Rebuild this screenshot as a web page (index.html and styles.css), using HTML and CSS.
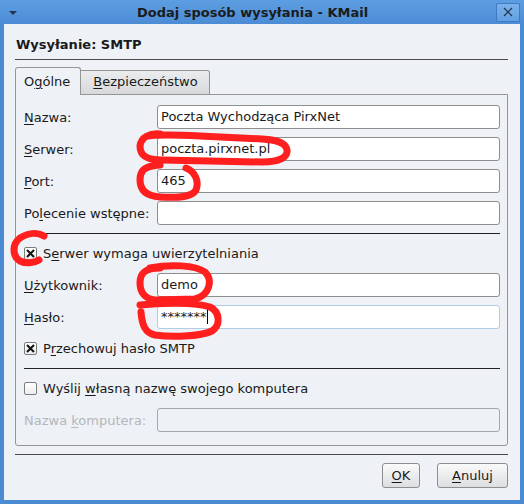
FILE: index.html
```html
<!DOCTYPE html>
<html>
<head>
    <meta charset="utf-8">
    <title>Dodaj sposób wysyłania - KMail</title>
    <link rel="stylesheet" href="styles.css">
</head>
<body>
<div class="window">
    <div class="titlebar">
        <span class="menu-arrow"></span>
        <span class="title">Dodaj sposób wysyłania - KMail</span>
        <span class="close-btn">
            <svg width="10" height="10" viewBox="0 0 10 10"><path d="M1 1 L9 9 M9 1 L1 9" stroke="#1e2f45" stroke-width="1.1" fill="none"/></svg>
        </span>
    </div>

    <div class="content">
        <h2 class="page-title">Wysyłanie: SMTP</h2>
        <div class="rule"></div>

        <div class="tabs">
            <div class="tab active">O<u>g</u>ólne</div>
            <div class="tab"><u>B</u>ezpieczeństwo</div>
        </div>

        <div class="panel">
            <div class="form-grid">
                <label><u>N</u>azwa:</label>
                <div class="input">Poczta Wychodząca PirxNet</div>
                <label><u>S</u>erwer:</label>
                <div class="input">poczta.pirxnet.pl</div>
                <label><u>P</u>ort:</label>
                <div class="input">465</div>
                <label>Po<u>l</u>ecenie wstępne:</label>
                <div class="input"></div>
            </div>

            <div class="sep"></div>

            <div class="check-row">
                <span class="checkbox checked"><svg width="9" height="9" viewBox="0 0 9 9"><path d="M1 1 L8 8 M8 1 L1 8" stroke="#111" stroke-width="2" fill="none"/></svg></span>
                <span>S<u>e</u>rwer wymaga uwierzytelniania</span>
            </div>

            <div class="form-grid auth">
                <label><u>U</u>żytkownik:</label>
                <div class="input">demo</div>
                <label><u>H</u>asło:</label>
                <div class="input focused">*******<span class="caret"></span></div>
            </div>

            <div class="check-row">
                <span class="checkbox checked"><svg width="9" height="9" viewBox="0 0 9 9"><path d="M1 1 L8 8 M8 1 L1 8" stroke="#111" stroke-width="2" fill="none"/></svg></span>
                <span>P<u>r</u>zechowuj hasło SMTP</span>
            </div>

            <div class="sep"></div>

            <div class="check-row">
                <span class="checkbox"></span>
                <span>Wyślij <u>w</u>łasną nazwę swojego komputera</span>
            </div>

            <div class="form-grid host">
                <label class="disabled">Nazwa <u>k</u>omputera:</label>
                <div class="input disabled"></div>
            </div>
        </div>

        <div class="rule bottom-rule"></div>

        <div class="buttons">
            <button class="btn btn-ok"><u>O</u>K</button>
            <button class="btn btn-cancel"><u>A</u>nuluj</button>
        </div>
    </div>

    <!-- hand-drawn highlights over the form -->
    <svg class="marks" width="524" height="504" viewBox="0 0 524 504">
        <g stroke="#ff1f1f" stroke-width="7" fill="none" stroke-linecap="round" stroke-linejoin="round">
            <path d="M160 134 C150 133 141 137 140 146 C140 156 147 160 162 160 L262 162 C280 162 288 157 287 150 C286 143 278 140 262 139 L200 136 C180 135 160 134 148 136"/>
            <path d="M186 168 C196 172 199 182 196 190 C192 197 180 198 160 197 C146 196 140 190 140 180 C140 170 145 166 160 165"/>
            <path d="M44 236 C37 232 28 233 20 238 C12 244 12 256 20 261 C26 264 34 263 39 260"/>
            <path d="M150 268 C170 264 195 265 205 272 C213 280 210 295 195 299 L155 300 C145 299 140 292 140 283 C140 273 145 268 160 268"/>
            <path d="M140 305 C160 303 195 302 210 307 C220 312 221 325 212 331 C200 337 170 337 155 335 C145 333 142 325 141 312"/>
        </g>
    </svg>
</div>
</body>
</html>
```

FILE: styles.css
```css
body {
    margin: 0;
    font-family: "DejaVu Sans", sans-serif;
    font-size: 13px;
    color: #1a1a1a;
}
u {
    text-decoration: underline;
    text-underline-offset: 2px;
}
.window {
    position: relative;
    width: 524px;
    height: 504px;
    box-sizing: border-box;
    padding: 0 4px 4px 4px;
    background-color: #4a8bd4;
    display: flex;
    flex-direction: column;
}
.titlebar {
    height: 24px;
    margin: 0 -4px;
    display: flex;
    align-items: center;
    background: linear-gradient(#5d9ee2, #4b8cd5);
    position: relative;
}
.menu-arrow {
    width: 0;
    height: 0;
    margin-left: 9px;
    margin-top: 1px;
    border-left: 4px solid transparent;
    border-right: 4px solid transparent;
    border-top: 4px solid #24344a;
}
.title {
    flex: 1;
    text-align: center;
    font-weight: bold;
    color: #1c1c1c;
    margin-right: 8px;
}
.close-btn {
    width: 22px;
    height: 17px;
    margin-right: 4px;
    border: 1px solid #3d7bc4;
    border-radius: 2px;
    background: linear-gradient(#7ab2ea, #62a0e2);
    display: flex;
    align-items: center;
    justify-content: center;
}
.content {
    flex: 1;
    background-color: #eef1f6;
    padding: 0 12px 0 11px;
    display: flex;
    flex-direction: column;
}
.page-title {
    margin: 13px 0 0 1px;
    font-size: 13px;
    line-height: 15px;
    font-weight: bold;
}
.rule {
    height: 1px;
    background-color: #4a4a4a;
    margin-top: 7px;
}
.tabs {
    display: flex;
    align-items: flex-end;
    margin-top: 7px;
    margin-bottom: -1px;
    position: relative;
    z-index: 1;
}
.tab {
    box-sizing: border-box;
    height: 25px;
    padding: 3px 11px 0 12px;
    line-height: 15px;
    border: 1px solid #959595;
    border-left: none;
    border-radius: 0 3px 0 0;
    background: linear-gradient(#ebecee, #d7d9dc);
}
.tab.active {
    height: 28px;
    padding: 6px 10px 0 8px;
    border-left: 1px solid #959595;
    border-bottom: none;
    border-radius: 3px 3px 0 0;
    background: #eef1f6;
}
.panel {
    border: 1px solid #959595;
    border-radius: 0 0 3px 3px;
    padding: 10px 7px 13px 8px;
}
.form-grid {
    display: grid;
    grid-template-columns: 133px 1fr;
    grid-auto-rows: 24px;
    row-gap: 8px;
    align-items: center;
}
.form-grid.auth,
.form-grid.host {
    margin-top: 10px;
}
.input {
    box-sizing: border-box;
    height: 24px;
    border: 1px solid #8e8e8e;
    border-radius: 3px;
    background-color: #fff;
    padding: 0 3px;
    line-height: 22px;
    white-space: nowrap;
}
.input.focused {
    border-color: #b4cbe4;
}
.input.disabled {
    background-color: #eef1f6;
    border-color: #a5a7aa;
}
.caret {
    display: inline-block;
    width: 1px;
    height: 15px;
    background-color: #000;
    vertical-align: -3px;
}
label.disabled {
    color: #b3b7bc;
}
.sep {
    height: 1px;
    background-color: #222;
    margin-top: 8px;
}
.check-row {
    display: flex;
    align-items: center;
    height: 20px;
    margin-top: 9px;
}
.check-row + .sep {
    margin-top: 10px;
}
.checkbox {
    box-sizing: border-box;
    width: 13px;
    height: 13px;
    margin-right: 6px;
    border: 1px solid #7c7c7c;
    border-radius: 2px;
    background: linear-gradient(#ffffff, #ececec);
    display: flex;
    align-items: center;
    justify-content: center;
}
.bottom-rule {
    margin-top: 8px;
}
.buttons {
    display: flex;
    justify-content: flex-end;
    gap: 17px;
    margin-top: 8px;
}
.btn {
    height: 25px;
    font-family: "DejaVu Sans", sans-serif;
    font-size: 13px;
    color: #1a1a1a;
    border: 1px solid #8e8e8e;
    border-radius: 3px;
    background: linear-gradient(#fafafa, #dcdee1);
    padding: 0;
}
.btn-ok {
    width: 38px;
}
.btn-cancel {
    width: 71px;
}
.marks {
    position: absolute;
    top: 0;
    left: 0;
    pointer-events: none;
}
```
